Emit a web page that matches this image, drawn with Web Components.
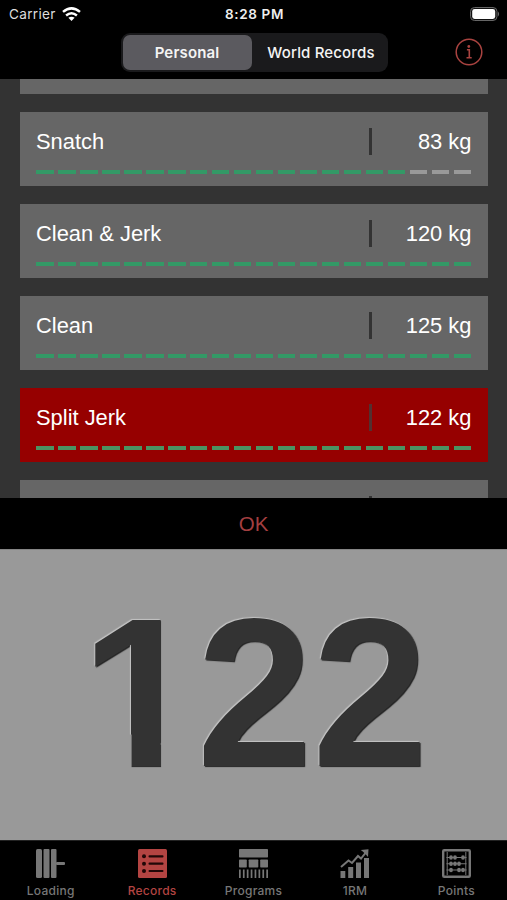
<!DOCTYPE html>
<html lang="en">
<head>
<meta charset="utf-8">
<meta name="viewport" content="width=device-width, initial-scale=1">
<title>Records</title>
<style>
    html, body { margin: 0; height: 100%; background: #000; overflow: hidden; }
    body { font-family: "Liberation Sans", Arial, sans-serif; }
</style>
</head>
<body>
<lift-app></lift-app>

<script>
class StatusBar extends HTMLElement {
    constructor() {
        super();
        this.attachShadow({ mode: 'open' }).innerHTML = `
            <style>
                :host { display: grid; grid-template-columns: 1fr auto 1fr; align-items: center; height: 27px; padding: 0 7px 0 9px; box-sizing: border-box; color: #ddd; font: 13.6px Inter, sans-serif; }
                .left { display: flex; align-items: center; gap: 6px; letter-spacing: 0.3px; }
                .time { font-weight: 600; font-size: 13.5px; letter-spacing: 0.65px; color: #eee; }
                .battery { justify-self: end; display: block; }
                svg { display: block; }
            </style>
            <div class="left"><span>${this.getAttribute('carrier')}</span>
                <svg width="19" height="14" viewBox="0 0 19 14" fill="none" stroke="#fff" stroke-width="2.5">
                    <path d="M1 4.9Q9.5 -2.1 18 4.9"/><path d="M4.1 8.5Q9.5 4 14.9 8.5"/>
                    <path d="M6.4 10.8Q9.5 8.5 12.6 10.8L9.5 13.9Z" fill="#fff" stroke="none"/>
                </svg>
            </div>
            <span class="time">${this.getAttribute('time')}</span>
            <svg class="battery" width="30" height="14" viewBox="0 0 30 14">
                <rect x=".5" y=".5" width="26.5" height="13" rx="4" fill="#111" stroke="#666"/>
                <rect x="2.2" y="2" width="23" height="10" rx="2.4" fill="#fff"/>
                <path d="M28 4.5Q30.3 7 28 9.5Z" fill="#666"/>
            </svg>
        `;
    }
}

class SegmentedControl extends HTMLElement {
    constructor() {
        super();
        this.attachShadow({ mode: 'open' }).innerHTML = `
            <style>
                :host { display: grid; grid-template-columns: 129px 1fr; width: 267px; height: 39px; box-sizing: border-box; padding: 2px; border-radius: 9px; background: #1a1a1c; }
                ::slotted(*) { display: flex; align-items: center; justify-content: center; box-sizing: border-box; padding: 0 0 0 5px; border-radius: 7px; color: #f4f4f4; font: 500 15px Inter, sans-serif; letter-spacing: 0.15px; white-space: nowrap; }
                ::slotted(.selected) { padding-left: 0; background: #5b5a5f; font-weight: 600; }
            </style>
            <slot></slot>
        `;
    }
}

class RecordCard extends HTMLElement {
    constructor() {
        super();
        this.attachShadow({ mode: 'open' });
    }

    connectedCallback() {
        const done = Number(this.getAttribute('progress'));
        let bars = '';
        if (this.hasAttribute('progress')) {
            for (let i = 0; i < 20; i++) bars += `<i class="${i < done ? 'on' : ''}"></i>`;
        }
        this.shadowRoot.innerHTML = `
            <style>
                :host { display: block; flex: none; box-sizing: border-box; height: 73.6px; padding: 16px 16.5px 0 16px; background: #666; color: #fff; font-size: 21.9px; --on: #339966; --off: #999; --line: #333; }
                :host([active]) { background: #960000; --on: #4b9362; --line: #533030; }
                .row { display: flex; height: 28px; line-height: 28px; }
                .name { flex: 1; }
                .line { width: 2.6px; height: 27px; background: var(--line); }
                .weight { width: 100px; text-align: right; }
                .bars { display: flex; justify-content: space-between; margin-top: 14px; }
                i { width: 17.6px; height: 4px; background: var(--off); }
                i.on { background: var(--on); }
            </style>
            <div class="row"><span class="name"><slot></slot></span><span class="line"></span><span class="weight">${this.getAttribute('weight') || ''}</span></div>
            <div class="bars">${bars}</div>
        `;
    }
}

class WeightPad extends HTMLElement {
    constructor() {
        super();
        const digits = [...this.getAttribute('value')].map(d => `<span class="d${d}">${d}</span>`).join('');
        this.attachShadow({ mode: 'open' }).innerHTML = `
            <style>
                :host { display: block; }
                .ok { height: 51px; line-height: 51px; text-align: center; background: #000; color: #a43f40; font-size: 20.5px; }
                .value { height: 291px; box-sizing: border-box; border-top: 1px solid #858585; background: #999; }
                .digits { display: flex; justify-content: center; line-height: 288px; color: #333; font-size: 208px; font-weight: bold; text-shadow: -1px -1px 1px #c4c4c4, 1px 1px 1px #222; transform: translateX(1px) scaleY(1.015); transform-origin: 0 218px; }
                /* plain stem, without the foot of the font's 1 */
                .d1 { clip-path: polygon(0 0, 77.6px 0, 77.6px 100%, 49.2px 100%, 49.2px 185px, 0 185px); transform: scaleX(1.04); transform-origin: 14px 0; }
            </style>
            <div class="ok">OK</div>
            <div class="value"><div class="digits">${digits}</div></div>
        `;
    }
}

const ICONS = {
    loading: `<rect x="0" y="0" width="6" height="29" rx="1.5"/><rect x="7.5" y="0" width="6" height="29" rx="1"/><rect x="15" y="0" width="5.5" height="29" rx="1"/><rect x="20" y="13" width="9" height="3" rx="1"/>`,
    records: `<rect width="29" height="29" rx="1.5"/><g fill="#200707"><circle cx="6" cy="7.3" r="2"/><circle cx="6" cy="14.7" r="2"/><circle cx="6" cy="22" r="2"/><rect x="10.5" y="6.2" width="15" height="2.2" rx="1"/><rect x="10.5" y="13.6" width="15" height="2.2" rx="1"/><rect x="10.5" y="20.9" width="15" height="2.2" rx="1"/></g>`,
    programs: `<rect width="29" height="8.5" rx=".7"/><rect y="10.5" width="7.8" height="8" rx=".7"/><rect x="9.7" y="10.5" width="9.6" height="8" rx=".7"/><rect x="21.2" y="10.5" width="7.8" height="8" rx=".7"/><path d="M0 20.5h1.7v8.5H0zM3.9 20.5h1.7v8.5H3.9zM7.8 20.5h1.7v8.5H7.8zM11.7 20.5h1.7v8.5h-1.7zM15.6 20.5h1.7v8.5h-1.7zM19.5 20.5h1.7v8.5h-1.7zM23.4 20.5h1.7v8.5h-1.7zM27.3 20.5H29v8.5h-1.7z"/>`,
    max: `<rect x=".5" y="22" width="4.8" height="7"/><rect x="8.2" y="18" width="5" height="11"/><rect x="16" y="13.5" width="5" height="15.5"/><rect x="24" y="9" width="5" height="20"/><path d="M1 18 8.5 11.5 12 14 18 7 21 9.5 27 2" fill="none" stroke="currentColor" stroke-width="2"/><path d="M20.8 1 28.5.3 28 8 26 5.8 23.3 3Z"/>`,
    points: `<rect x="1.2" y="1.2" width="26.6" height="26.6" rx="1" fill="none" stroke="currentColor" stroke-width="2.4"/><path d="M5.2 3v23M23.8 3v23" stroke="currentColor" stroke-width="1"/><path d="M4.5 8.5h20M4.5 14.7h20M4.5 21h20" stroke="currentColor" stroke-width="1.1"/><g><ellipse cx="9" cy="8.5" rx="1.9" ry="2.2"/><ellipse cx="13" cy="8.5" rx="1.9" ry="2.2"/><ellipse cx="21" cy="8.5" rx="1.9" ry="2.2"/><ellipse cx="9" cy="14.7" rx="1.9" ry="2.2"/><ellipse cx="13" cy="14.7" rx="1.9" ry="2.2"/><ellipse cx="17" cy="14.7" rx="1.9" ry="2.2"/><ellipse cx="9" cy="21" rx="1.9" ry="2.2"/><ellipse cx="17" cy="21" rx="1.9" ry="2.2"/><ellipse cx="21" cy="21" rx="1.9" ry="2.2"/></g>`
};

class TabItem extends HTMLElement {
    constructor() {
        super();
        this.attachShadow({ mode: 'open' });
    }

    connectedCallback() {
        this.shadowRoot.innerHTML = `
            <style>
                :host { display: flex; flex: 1; flex-direction: column; align-items: center; gap: 4px; padding-top: 8px; color: #777; font: 500 12px/17px Inter, sans-serif; letter-spacing: 0.25px; }
                :host([active]) { color: #b34442; }
                svg { display: block; fill: currentColor; }
            </style>
            <svg width="29" height="29" viewBox="0 0 29 29">${ICONS[this.getAttribute('icon')]}</svg>
            <span><slot></slot></span>
        `;
    }
}

class LiftApp extends HTMLElement {
    constructor() {
        super();
        this.attachShadow({ mode: 'open' }).innerHTML = `
            <style>
                :host { display: flex; flex-direction: column; width: 507px; height: 900px; overflow: hidden; background: #000; }
                .nav { display: grid; grid-template-columns: 1fr auto 1fr; align-items: center; height: 52px; padding: 0 24px 1px 25px; box-sizing: border-box; }
                .info { grid-column: 3; justify-self: end; display: block; margin-bottom: 2px; }
                segmented-control { grid-column: 2; }
                .list { display: flex; flex-direction: column; justify-content: flex-end; gap: 18.4px; height: 419px; padding: 0 19px 0 20px; box-sizing: border-box; overflow: hidden; background: #333; }
                /* last card is scrolled partly out of view */
                .list record-card:last-child { margin-bottom: -55.6px; }
                .tabs { display: flex; height: 60px; box-sizing: border-box; border-top: 1px solid #222; }
            </style>
            <status-bar carrier="Carrier" time="8:28 PM"></status-bar>
            <div class="nav">
                <segmented-control><span class="selected">Personal</span><span>World Records</span></segmented-control>
                <svg class="info" width="28" height="28" viewBox="0 0 28 28" fill="none" stroke="#a94340">
                    <circle cx="14" cy="14" r="12.8" stroke-width="1.5"/>
                    <path d="M11.9 11.8h2.4v7.8M11.5 19.8h5.2" stroke-width="1.6"/>
                    <circle cx="13.8" cy="8.5" r="1.4" fill="#a94340" stroke="none"/>
                </svg>
            </div>
            <div class="list">
                <record-card></record-card>
                <record-card weight="83 kg" progress="17">Snatch</record-card>
                <record-card weight="120 kg" progress="20">Clean &amp; Jerk</record-card>
                <record-card weight="125 kg" progress="20">Clean</record-card>
                <record-card weight="122 kg" progress="20" active>Split Jerk</record-card>
                <record-card></record-card>
            </div>
            <weight-pad value="122"></weight-pad>
            <div class="tabs">
                <tab-item icon="loading">Loading</tab-item>
                <tab-item icon="records" active>Records</tab-item>
                <tab-item icon="programs">Programs</tab-item>
                <tab-item icon="max">1RM</tab-item>
                <tab-item icon="points">Points</tab-item>
            </div>
        `;
    }
}

customElements.define('status-bar', StatusBar);
customElements.define('segmented-control', SegmentedControl);
customElements.define('record-card', RecordCard);
customElements.define('weight-pad', WeightPad);
customElements.define('tab-item', TabItem);
customElements.define('lift-app', LiftApp);
</script>
</body>
</html>
